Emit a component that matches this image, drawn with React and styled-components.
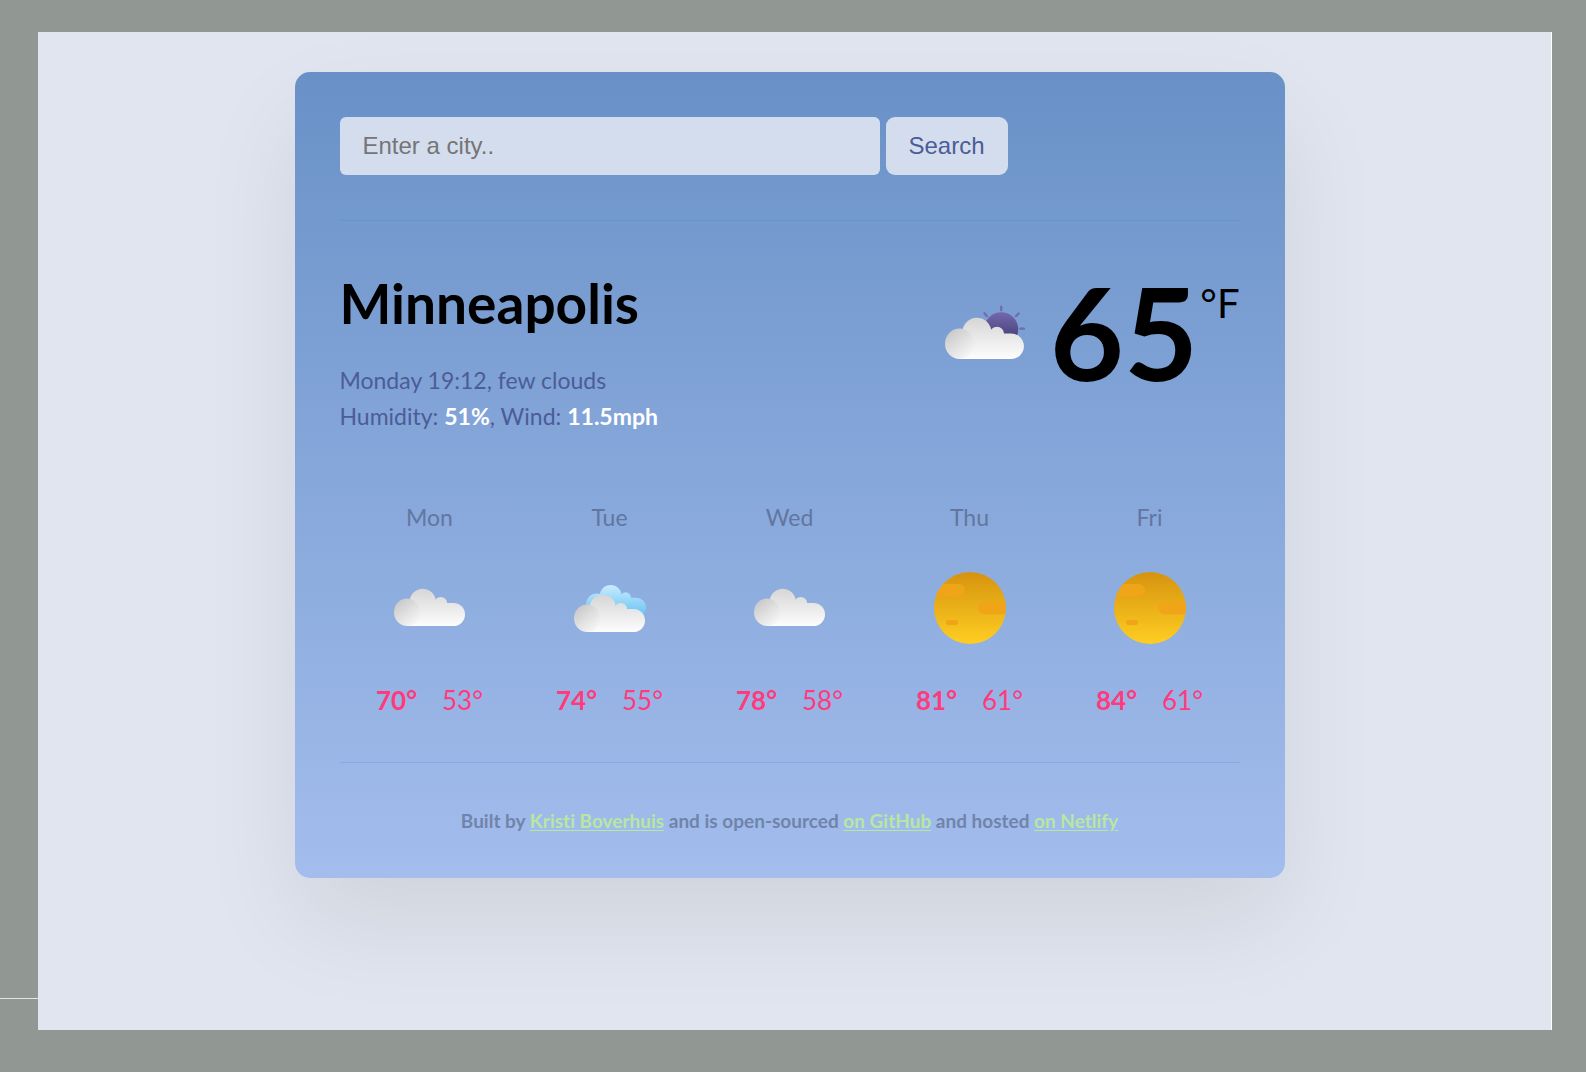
import React from "react";
import styled, { createGlobalStyle } from "styled-components";

const GlobalStyle = createGlobalStyle`
  *, *::before, *::after { box-sizing: border-box; }
  body {
    margin: 0;
    font-family: Lato, "Noto Sans", sans-serif;
    font-variant-ligatures: none;
  }
`;

const Frame = styled.div`
  display: grid;
  grid-template-columns: 38px 1fr 34px;
  min-height: 100vh;
  padding: 32px 0 42px;
  background: #919792;
`;

const Gutter = styled.div`
  display: flex;
  flex-direction: column;
  justify-content: flex-end;
  padding-bottom: 31px;
`;

const GutterLine = styled.div`
  height: 1px;
  background: #e0e5ef;
`;

const Page = styled.main`
  display: flex;
  justify-content: center;
  align-items: flex-start;
  padding: 40px 10px 40px 0;
  border-right: 1px solid #fff;
  background: #e0e5ef;
`;

const Card = styled.section`
  width: 100%;
  max-width: 990px;
  padding: 45px;
  border-radius: 15px;
  background: linear-gradient(to top, #a3bded 0%, #6991c7 100%);
  box-shadow: 0 45px 100px rgba(0, 0, 0, 0.08);
`;

const SearchForm = styled.form`
  display: flex;
  gap: 6px;
  padding-bottom: 45px;
`;

const SearchInput = styled.input`
  flex: 0 1 60%;
  min-width: 0;
  height: 58px;
  padding: 0 23px;
  border: 0;
  border-radius: 6px;
  background: #d4ddee;
  color: #48484a;
  font: 24px "Liberation Sans", Arial, sans-serif;
  &::placeholder { color: #757575; opacity: 1; }
`;

const SearchButton = styled.button`
  height: 58px;
  padding: 0 23px;
  border: 0;
  border-radius: 9px;
  background: #d4ddee;
  color: #4c5c96;
  font: 24px "Liberation Sans", Arial, sans-serif;
`;

const Divider = styled.hr`
  height: 1px;
  margin: 0;
  border: 0;
  background: ${(p) => p.$color};
`;

const Overview = styled.div`
  display: flex;
  justify-content: space-between;
  align-items: flex-start;
  padding-top: 46px;
`;

const City = styled.h1`
  margin: 0 0 23px;
  color: #000;
  font-size: 55px;
  line-height: 72px;
  font-weight: 700;
`;

const Details = styled.p`
  margin: 0;
  color: #4c5c96;
  font-size: 23px;
  line-height: 36px;
`;

const Value = styled.strong`
  color: #fff;
  font-weight: 700;
`;

const Current = styled.div`
  display: flex;
  align-items: flex-start;
  color: #000;
`;

const CurrentIcon = styled.div`
  display: flex;
  padding: 32px 25px 0 0;
`;

const Temperature = styled.span`
  font-size: 128px;
  line-height: 130px;
  font-weight: 700;
`;

const Unit = styled.span`
  padding: 11px 0 0 2px;
  font-size: 40px;
  line-height: 50px;
`;

const Forecast = styled.ul`
  display: grid;
  grid-template-columns: repeat(5, 1fr);
  margin: 0;
  padding: 65px 0 42px;
  list-style: none;
`;

const Day = styled.li`
  display: flex;
  flex-direction: column;
  align-items: center;
`;

const DayName = styled.span`
  color: #62769f;
  font-size: 23px;
  line-height: 36px;
`;

const DayIcon = styled.div`
  display: flex;
  padding: 37px 0 36px;
`;

const Range = styled.div`
  display: flex;
  gap: 25px;
  color: #ff3a7d;
  font-size: 26px;
  line-height: 40px;
`;

const High = styled.span`
  font-weight: 700;
`;

const Low = styled.span`
  font-weight: 400;
`;

const Footer = styled.footer`
  padding-top: 45px;
  color: #7084aa;
  font-size: 19px;
  line-height: 25px;
  font-weight: 700;
  text-align: center;
`;

const FooterLink = styled.a`
  color: #b5e8a0;
  text-decoration: underline;
  text-underline-offset: 2px;
`;

function FrontCloud({ id, y = 0 }) {
  return (
    <g transform={`translate(0 ${y})`}>
      <defs>
        <linearGradient id={`${id}-body`} gradientUnits="userSpaceOnUse" x1="0" y1="17" x2="0" y2="54">
          <stop offset="0" stopColor="#d6d6d6" />
          <stop offset="1" stopColor="#fdfdfd" />
        </linearGradient>
        <linearGradient id={`${id}-puff`} gradientUnits="userSpaceOnUse" x1="5" y1="29" x2="23" y2="52">
          <stop offset="0" stopColor="#cacaca" />
          <stop offset="1" stopColor="#f8f8f8" />
        </linearGradient>
      </defs>
      <g fill={`url(#${id}-body)`}>
        <rect x="8" y="31" width="63" height="23" rx="11.5" />
        <path d="M13 54V34l8-4h26l4 4v20z" />
        <circle cx="28.7" cy="29.8" r="13" />
        <circle cx="46.7" cy="31.3" r="6.4" />
      </g>
      <ellipse cx="13.1" cy="40.3" rx="13.1" ry="13.7" fill={`url(#${id}-puff)`} />
    </g>
  );
}

function BackCloud({ id }) {
  return (
    <g fill={`url(#${id}-back)`}>
      <defs>
        <linearGradient id={`${id}-back`} gradientUnits="userSpaceOnUse" x1="0" y1="13" x2="0" y2="45">
          <stop offset="0" stopColor="#c9ebff" />
          <stop offset="1" stopColor="#65c1f5" />
        </linearGradient>
      </defs>
      <circle cx="23" cy="32.5" r="11" />
      <circle cx="36.7" cy="24" r="11" />
      <circle cx="51.7" cy="25.4" r="5.2" />
      <rect x="23" y="25.7" width="49" height="19.6" rx="9.8" />
    </g>
  );
}

function SunBehind({ id }) {
  return (
    <g>
      <defs>
        <linearGradient id={`${id}-sun`} x1="0" y1="0" x2="0" y2="1">
          <stop offset="0" stopColor="#7468ae" />
          <stop offset="0.7" stopColor="#4b447d" />
        </linearGradient>
      </defs>
      <circle cx="50.6" cy="27.2" r="15.3" fill={`url(#${id}-sun)`} />
      <path
        d="M50.6 6.8v3.4M67.7 26.6h3.4M63.9 15.4l2.4-2.4M37.7 15.4l-2.2-2.6"
        stroke="#7568b0"
        strokeWidth="2"
        strokeLinecap="round"
      />
    </g>
  );
}

function ClearSky({ id }) {
  return (
    <g>
      <defs>
        <linearGradient id={`${id}-disc`} x1="0" y1="0" x2="0" y2="1">
          <stop offset="0" stopColor="#d6930f" />
          <stop offset="1" stopColor="#ffce22" />
        </linearGradient>
        <clipPath id={`${id}-clip`}>
          <circle cx="36" cy="36" r="36" />
        </clipPath>
      </defs>
      <circle cx="36" cy="36" r="36" fill={`url(#${id}-disc)`} />
      <g clipPath={`url(#${id}-clip)`} fill="#f0a417">
        <rect x="-10" y="12" width="41" height="12.4" rx="6.2" />
        <rect x="44.4" y="29.8" width="40" height="12.4" rx="6.2" />
        <rect x="12" y="48" width="12" height="5" rx="2.5" />
      </g>
    </g>
  );
}

function WeatherIcon({ kind, id, size = 72 }) {
  return (
    <svg width={size} height={size} viewBox="0 0 72 72" role="img" aria-label={kind}>
      {kind === "few clouds" && <SunBehind id={id} />}
      {kind === "broken clouds" && <BackCloud id={id} />}
      {kind === "clear sky" ? (
        <ClearSky id={id} />
      ) : (
        <FrontCloud id={id} y={kind === "broken clouds" ? 6 : 0} />
      )}
    </svg>
  );
}

const days = [
  { name: "Mon", kind: "cloudy", high: 70, low: 53 },
  { name: "Tue", kind: "broken clouds", high: 74, low: 55 },
  { name: "Wed", kind: "cloudy", high: 78, low: 58 },
  { name: "Thu", kind: "clear sky", high: 81, low: 61 },
  { name: "Fri", kind: "clear sky", high: 84, low: 61 },
];

export default function App() {
  return (
    <>
      <GlobalStyle />
      <Frame>
        <Gutter>
          <GutterLine />
        </Gutter>
        <Page>
          <Card>
            <SearchForm onSubmit={(e) => e.preventDefault()}>
              <SearchInput type="text" placeholder="Enter a city.." aria-label="City" />
              <SearchButton type="submit">Search</SearchButton>
            </SearchForm>
            <Divider $color="#6793cf" />
            <Overview>
              <div>
                <City>Minneapolis</City>
                <Details>Monday 19:12, few clouds</Details>
                <Details>
                  Humidity: <Value>51%</Value>, Wind: <Value>11.5mph</Value>
                </Details>
              </div>
              <Current>
                <CurrentIcon>
                  <WeatherIcon kind="few clouds" id="now" size={80} />
                </CurrentIcon>
                <Temperature>65</Temperature>
                <Unit>°F</Unit>
              </Current>
            </Overview>
            <Forecast>
              {days.map((day) => (
                <Day key={day.name}>
                  <DayName>{day.name}</DayName>
                  <DayIcon>
                    <WeatherIcon kind={day.kind} id={day.name} />
                  </DayIcon>
                  <Range>
                    <High>{day.high}°</High>
                    <Low>{day.low}°</Low>
                  </Range>
                </Day>
              ))}
            </Forecast>
            <Divider $color="#84a9e6" />
            <Footer>
              Built by <FooterLink href="#author">Kristi Boverhuis</FooterLink> and is open-sourced{" "}
              <FooterLink href="#github">on GitHub</FooterLink> and hosted{" "}
              <FooterLink href="#netlify">on Netlify</FooterLink>
            </Footer>
          </Card>
        </Page>
        <div />
      </Frame>
    </>
  );
}
